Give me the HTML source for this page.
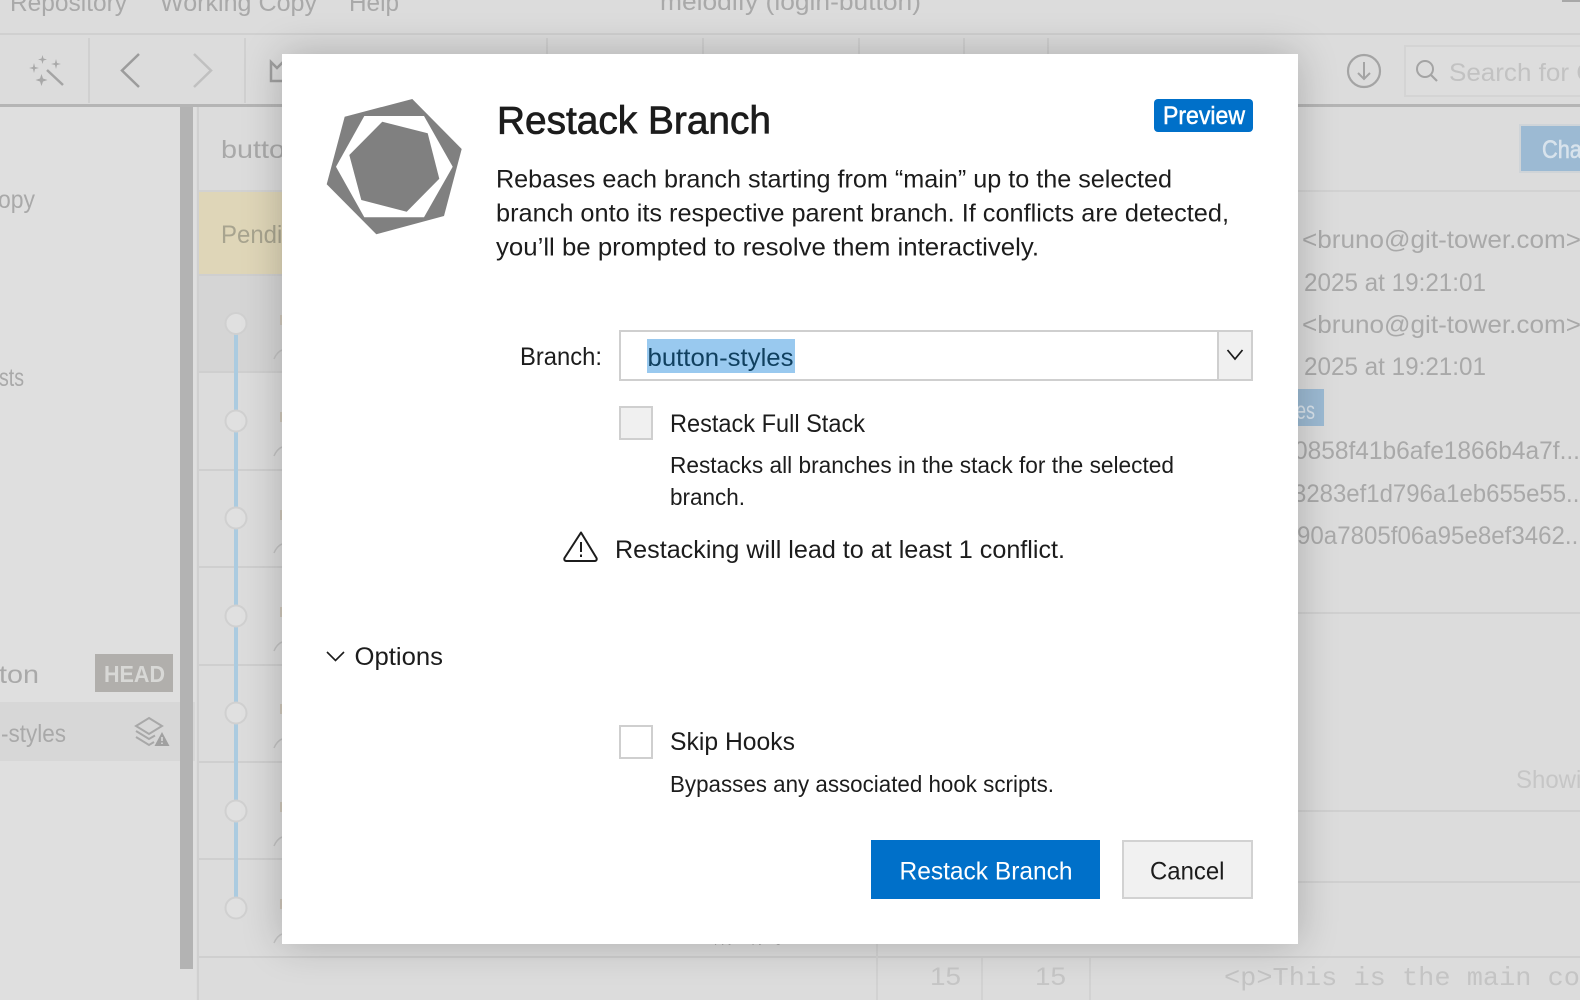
<!DOCTYPE html>
<html lang="en">
<head>
<meta charset="utf-8">
<title>Restack Branch</title>
<style>
html,body{margin:0;padding:0;width:1580px;height:1000px;overflow:hidden;background:#dcdcdc}
svg{position:absolute;left:0;top:0;display:block}
text{font-family:"Liberation Sans",sans-serif}
.bg text{fill:#a9a9a9;font-size:25px}
.d text{fill:#1c1c1c;font-size:24px}
#dlg{position:absolute;left:282px;top:54px;width:1016px;height:890px;background:#fff;box-shadow:0 0 38px rgba(0,0,0,.22)}
</style>
</head>
<body>
<svg class="bg" width="1580" height="1000" viewBox="0 0 1580 1000">
  <rect width="1580" height="1000" fill="#dcdcdc"/>
  <!-- sidebar -->
  <rect x="0" y="107" width="196" height="893" fill="#dfdfdf"/>
  <rect x="0" y="702" width="195" height="59" fill="#d7d7d7"/>
  <rect x="180" y="107" width="13" height="862" fill="#b3b3b3"/>
  <rect x="197" y="107" width="2" height="893" fill="#d0d0d0"/>
  <!-- title bar -->
  <rect x="0" y="33" width="1580" height="2" fill="#d0d0d0"/>
  <rect x="1562" y="0" width="18" height="2" fill="#a8a8a8"/>
  <text x="10" y="11" textLength="117" lengthAdjust="spacingAndGlyphs">Repository</text>
  <text x="160" y="11" textLength="157" lengthAdjust="spacingAndGlyphs">Working Copy</text>
  <text x="349" y="11" textLength="50" lengthAdjust="spacingAndGlyphs">Help</text>
  <text x="660" y="10" textLength="261" lengthAdjust="spacingAndGlyphs">melodify (login-button)</text>
  <!-- toolbar -->
  <rect x="0" y="104" width="1580" height="3" fill="#b5b5b5"/>
  <g fill="#d0d0d0">
    <rect x="88" y="38" width="2" height="65"/><rect x="244" y="38" width="2" height="65"/>
    <rect x="546" y="38" width="2" height="20"/><rect x="702" y="38" width="2" height="20"/>
    <rect x="858" y="38" width="2" height="20"/><rect x="963" y="38" width="2" height="20"/>
    <rect x="1047" y="38" width="2" height="20"/>
  </g>
  <g fill="#a8a8a8">
    <path d="M42.500 55l1 3.500 3.500 1-3.500 1-1 3.500-1-3.500-3.500-1 3.500-1z"/>
    <path d="M56 59l1 4 4 1-4 1-1 4-1-4-4-1 4-1z"/>
    <path d="M34 63l1 4 4 1-4 1-1 4-1-4-4-1 4-1z"/>
    <path d="M41.500 74l1.500 4.500 4.500 1.500-4.500 1.500-1.500 4.500-1.500-4.500-4.500-1.500 4.500-1.500z"/>
  </g>
  <path d="M47 70l16 15" stroke="#a4a4a4" stroke-width="2.500" fill="none"/>
  <path d="M139 54l-17 16.500 17 16.500" stroke="#9c9c9c" stroke-width="2.500" fill="none"/>
  <path d="M194 54l17 16.500-17 16.500" stroke="#c0c0c0" stroke-width="2.500" fill="none"/>
  <path d="M283 81h-12v-19l6 6 6-6" stroke="#a0a0a0" stroke-width="2.500" fill="none"/>
  <circle cx="1364" cy="71" r="16" fill="none" stroke="#a4a4a4" stroke-width="2.200"/>
  <path d="M1364 62v17m-6-6l6 6 6-6" stroke="#a4a4a4" stroke-width="2" fill="none"/>
  <rect x="1405" y="46" width="185" height="50" fill="#dddddd" stroke="#d4d4d4" stroke-width="2"/>
  <circle cx="1425" cy="69" r="8" fill="none" stroke="#a4a4a4" stroke-width="2"/>
  <path d="M1431 75l6 6" stroke="#a4a4a4" stroke-width="2.200"/>
  <text x="1449" y="81" style="fill:#c2c2c2" textLength="146" lengthAdjust="spacingAndGlyphs">Search for C</text>
  <!-- sidebar text -->
  <text x="-2" y="208" textLength="37" lengthAdjust="spacingAndGlyphs">opy</text>
  <text x="-1" y="386" textLength="25" lengthAdjust="spacingAndGlyphs">sts</text>
  <text x="-1" y="683" textLength="40" lengthAdjust="spacingAndGlyphs">ton</text>
  <rect x="95" y="654" width="78" height="38" fill="#b1afac"/>
  <text x="104" y="682" style="fill:#d8d8d6;font-weight:700;font-size:23px" textLength="61" lengthAdjust="spacingAndGlyphs">HEAD</text>
  <text x="1" y="742" textLength="65" lengthAdjust="spacingAndGlyphs">-styles</text>
  <g fill="none" stroke="#a8a8a8" stroke-width="2">
    <path d="M149 718l13 8-13 8-13-8z"/>
    <path d="M136 731l13 8 6-3.500"/>
    <path d="M136 737l13 8 5-3"/>
  </g>
  <path d="M162 732l7.500 14h-15z" fill="#a0a0a0"/>
  <path d="M162 737v4m0 1.500v1.500" stroke="#dcdcdc" stroke-width="1.500"/>
  <!-- main header -->
  <text x="221" y="158" textLength="80" lengthAdjust="spacingAndGlyphs">button</text>
  <rect x="199" y="190" width="1381" height="2" fill="#d2d2d2"/>
  <rect x="199" y="192" width="90" height="82" fill="#dfd6b8"/>
  <text x="221" y="243" style="fill:#a8a48f" textLength="88" lengthAdjust="spacingAndGlyphs">Pending</text>
  <rect x="199" y="276" width="90" height="96" fill="#d5d5d5"/>
  <g fill="#cfcfcf">
    <rect x="199" y="274" width="90" height="2"/><rect x="199" y="371" width="90" height="2"/>
    <rect x="199" y="469" width="90" height="2"/><rect x="199" y="566" width="90" height="2"/>
    <rect x="199" y="664" width="90" height="2"/><rect x="199" y="761" width="90" height="2"/>
    <rect x="199" y="858" width="90" height="2"/><rect x="199" y="956" width="1381" height="2"/>
  </g>
  <rect x="234" y="323" width="4" height="585" fill="#abcbe0"/>
  <g fill="#e0e0e0" stroke="#d0d0d0" stroke-width="2">
    <circle cx="236" cy="323.500" r="10.500"/><circle cx="236" cy="421" r="10.500"/>
    <circle cx="236" cy="518" r="10.500"/><circle cx="236" cy="616" r="10.500"/>
    <circle cx="236" cy="713" r="10.500"/><circle cx="236" cy="811" r="10.500"/>
    <circle cx="236" cy="908" r="10.500"/>
  </g>
  <g fill="none" stroke="#c2c2c2" stroke-width="1.500">
    <path d="M274 359q3-7 8-9"/><path d="M274 456q3-7 8-9"/><path d="M274 553q3-7 8-9"/>
    <path d="M274 651q3-7 8-9"/><path d="M274 748q3-7 8-9"/><path d="M274 846q3-7 8-9"/><path d="M274 943q3-7 8-9"/>
  </g>
  <g fill="#cfc7bb">
    <rect x="280" y="315" width="2" height="10"/><rect x="280" y="412" width="2" height="10"/><rect x="280" y="510" width="2" height="10"/>
    <rect x="280" y="607" width="2" height="10"/><rect x="280" y="704" width="2" height="10"/><rect x="280" y="802" width="2" height="10"/><rect x="280" y="899" width="2" height="10"/>
  </g>
  <!-- details pane -->
  <rect x="1520" y="125" width="70" height="47" fill="#9cbad3" stroke="#cfd4d8" stroke-width="2"/>
  <text x="1542" y="158" style="fill:#d8e3ec;stroke:#d8e3ec;stroke-width:.6px" textLength="52" lengthAdjust="spacingAndGlyphs">Chan</text>
  <text x="1302" y="248" textLength="279" lengthAdjust="spacingAndGlyphs">&lt;bruno@git-tower.com&gt;</text>
  <text x="1304" y="291" textLength="182" lengthAdjust="spacingAndGlyphs">2025 at 19:21:01</text>
  <text x="1302" y="333" textLength="279" lengthAdjust="spacingAndGlyphs">&lt;bruno@git-tower.com&gt;</text>
  <text x="1304" y="375" textLength="182" lengthAdjust="spacingAndGlyphs">2025 at 19:21:01</text>
  <rect x="1270" y="389" width="54" height="37" fill="#9cbad3"/>
  <text x="1296" y="419" style="fill:#d8e3ec" textLength="19" lengthAdjust="spacingAndGlyphs">es</text>
  <text x="1294" y="459" textLength="286" lengthAdjust="spacingAndGlyphs">0858f41b6afe1866b4a7f...</text>
  <text x="1293" y="502" textLength="293" lengthAdjust="spacingAndGlyphs">3283ef1d796a1eb655e55...</text>
  <text x="1297" y="544" textLength="288" lengthAdjust="spacingAndGlyphs">90a7805f06a95e8ef3462...</text>
  <rect x="1298" y="612" width="282" height="2" fill="#d0d0d0"/>
  <text x="1516" y="788" style="fill:#c6c6c6" textLength="92" lengthAdjust="spacingAndGlyphs">Showing</text>
  <rect x="1298" y="810" width="282" height="2" fill="#d0d0d0"/>
  <rect x="1298" y="881" width="282" height="2" fill="#d0d0d0"/>
  <!-- text peeking below the dialog -->
  <text x="700" y="940" textLength="82" lengthAdjust="spacingAndGlyphs">happy copying</text>
  <!-- diff -->
  <g fill="#d2d2d2">
    <rect x="876" y="944" width="2" height="56"/><rect x="981" y="958" width="2" height="42"/><rect x="1089" y="958" width="2" height="42"/>
  </g>
  <text x="930" y="985" style="fill:#c6c6c6" textLength="31" lengthAdjust="spacingAndGlyphs">15</text>
  <text x="1035" y="985" style="fill:#c6c6c6" textLength="31" lengthAdjust="spacingAndGlyphs">15</text>
  <text x="1224" y="985" style="font-family:'Liberation Mono',monospace;fill:#c4c4c4;font-size:26px" textLength="356" lengthAdjust="spacingAndGlyphs">&lt;p&gt;This is the main co</text>
</svg>

<div id="dlg"></div>

<svg class="d" width="1580" height="1000" viewBox="0 0 1580 1000">
  <!-- logo -->
  <path d="M412.300 99L461.700 149 444 216 376.300 234.300 326.700 184.300 344.700 116.700z" fill="#808080"/>
  <path d="M364.300 116H424L452.700 166.700 424 217.300H364.300L336 166.700z" fill="#fff"/>
  <path d="M382.300 121.700L427.700 133.300 439.300 178.700 406.700 211.700 361.300 200 349.300 155z" fill="#808080"/>
  <!-- heading -->
  <text x="497" y="133.500" style="font-size:39px;stroke:#1c1c1c;stroke-width:.75px" textLength="274" lengthAdjust="spacingAndGlyphs">Restack Branch</text>
  <rect x="1154" y="99" width="99" height="33" rx="4" fill="#0070c9"/>
  <text x="1163" y="124" style="fill:#fff;font-size:25px;stroke:#fff;stroke-width:.5px" textLength="82" lengthAdjust="spacingAndGlyphs">Preview</text>
  <text x="496" y="187.500" style="font-size:25px" textLength="676" lengthAdjust="spacingAndGlyphs">Rebases each branch starting from “main” up to the selected</text>
  <text x="496" y="221.500" style="font-size:25px" textLength="733" lengthAdjust="spacingAndGlyphs">branch onto its respective parent branch. If conflicts are detected,</text>
  <text x="496" y="255.500" style="font-size:25px" textLength="543" lengthAdjust="spacingAndGlyphs">you’ll be prompted to resolve them interactively.</text>
  <!-- branch -->
  <text x="520" y="365" style="font-size:25px" textLength="82" lengthAdjust="spacingAndGlyphs">Branch:</text>
  <rect x="620" y="331" width="632" height="49" fill="#fff" stroke="#cfcfcf" stroke-width="2"/>
  <rect x="1218" y="332" width="33" height="47" fill="#f0f0f0"/>
  <rect x="1217" y="332" width="2" height="47" fill="#cfcfcf"/>
  <path d="M1227.500 350l7.500 9 7.500-9" fill="none" stroke="#1a1a1a" stroke-width="1.700"/>
  <rect x="647" y="339" width="148" height="34" fill="#99c9ef"/>
  <text x="647.500" y="366" style="font-size:25px;fill:#10405f" textLength="146" lengthAdjust="spacingAndGlyphs">button-styles</text>
  <!-- full stack -->
  <rect x="620" y="407" width="32" height="32" fill="#f0f0f0" stroke="#cfcfcf" stroke-width="2"/>
  <text x="670" y="432" style="font-size:25px" textLength="195" lengthAdjust="spacingAndGlyphs">Restack Full Stack</text>
  <text x="670" y="473" style="font-size:23px" textLength="504" lengthAdjust="spacingAndGlyphs">Restacks all branches in the stack for the selected</text>
  <text x="670" y="505" style="font-size:23px" textLength="75" lengthAdjust="spacingAndGlyphs">branch.</text>
  <!-- warning -->
  <path d="M581 532.500L596.500 558a2 2 0 0 1-1.700 3H566.200a2 2 0 0 1-1.700-3z" fill="none" stroke="#1c1c1c" stroke-width="2" stroke-linejoin="round"/>
  <path d="M581 542v10m0 2.500v2.500" stroke="#1c1c1c" stroke-width="2" fill="none"/>
  <text x="615" y="558" style="font-size:25px" textLength="450" lengthAdjust="spacingAndGlyphs">Restacking will lead to at least 1 conflict.</text>
  <!-- options -->
  <path d="M327 652l8.500 8.500 8.500-8.500" fill="none" stroke="#1c1c1c" stroke-width="1.600"/>
  <text x="354.500" y="665" style="font-size:25px" textLength="88.500" lengthAdjust="spacingAndGlyphs">Options</text>
  <rect x="620" y="726" width="32" height="32" fill="#fff" stroke="#cfcfcf" stroke-width="2"/>
  <text x="670" y="750" style="font-size:25px" textLength="125" lengthAdjust="spacingAndGlyphs">Skip Hooks</text>
  <text x="670" y="792" style="font-size:23px" textLength="384" lengthAdjust="spacingAndGlyphs">Bypasses any associated hook scripts.</text>
  <!-- buttons -->
  <rect x="871" y="840" width="229" height="59" fill="#0070c9"/>
  <text x="899.500" y="879.500" style="fill:#fff;font-size:25px" textLength="173" lengthAdjust="spacingAndGlyphs">Restack Branch</text>
  <rect x="1123" y="841" width="129" height="57" fill="#f1f1f1" stroke="#d2d2d2" stroke-width="2"/>
  <text x="1150" y="879.500" style="font-size:25px" textLength="74.500" lengthAdjust="spacingAndGlyphs">Cancel</text>
</svg>
</body>
</html>
